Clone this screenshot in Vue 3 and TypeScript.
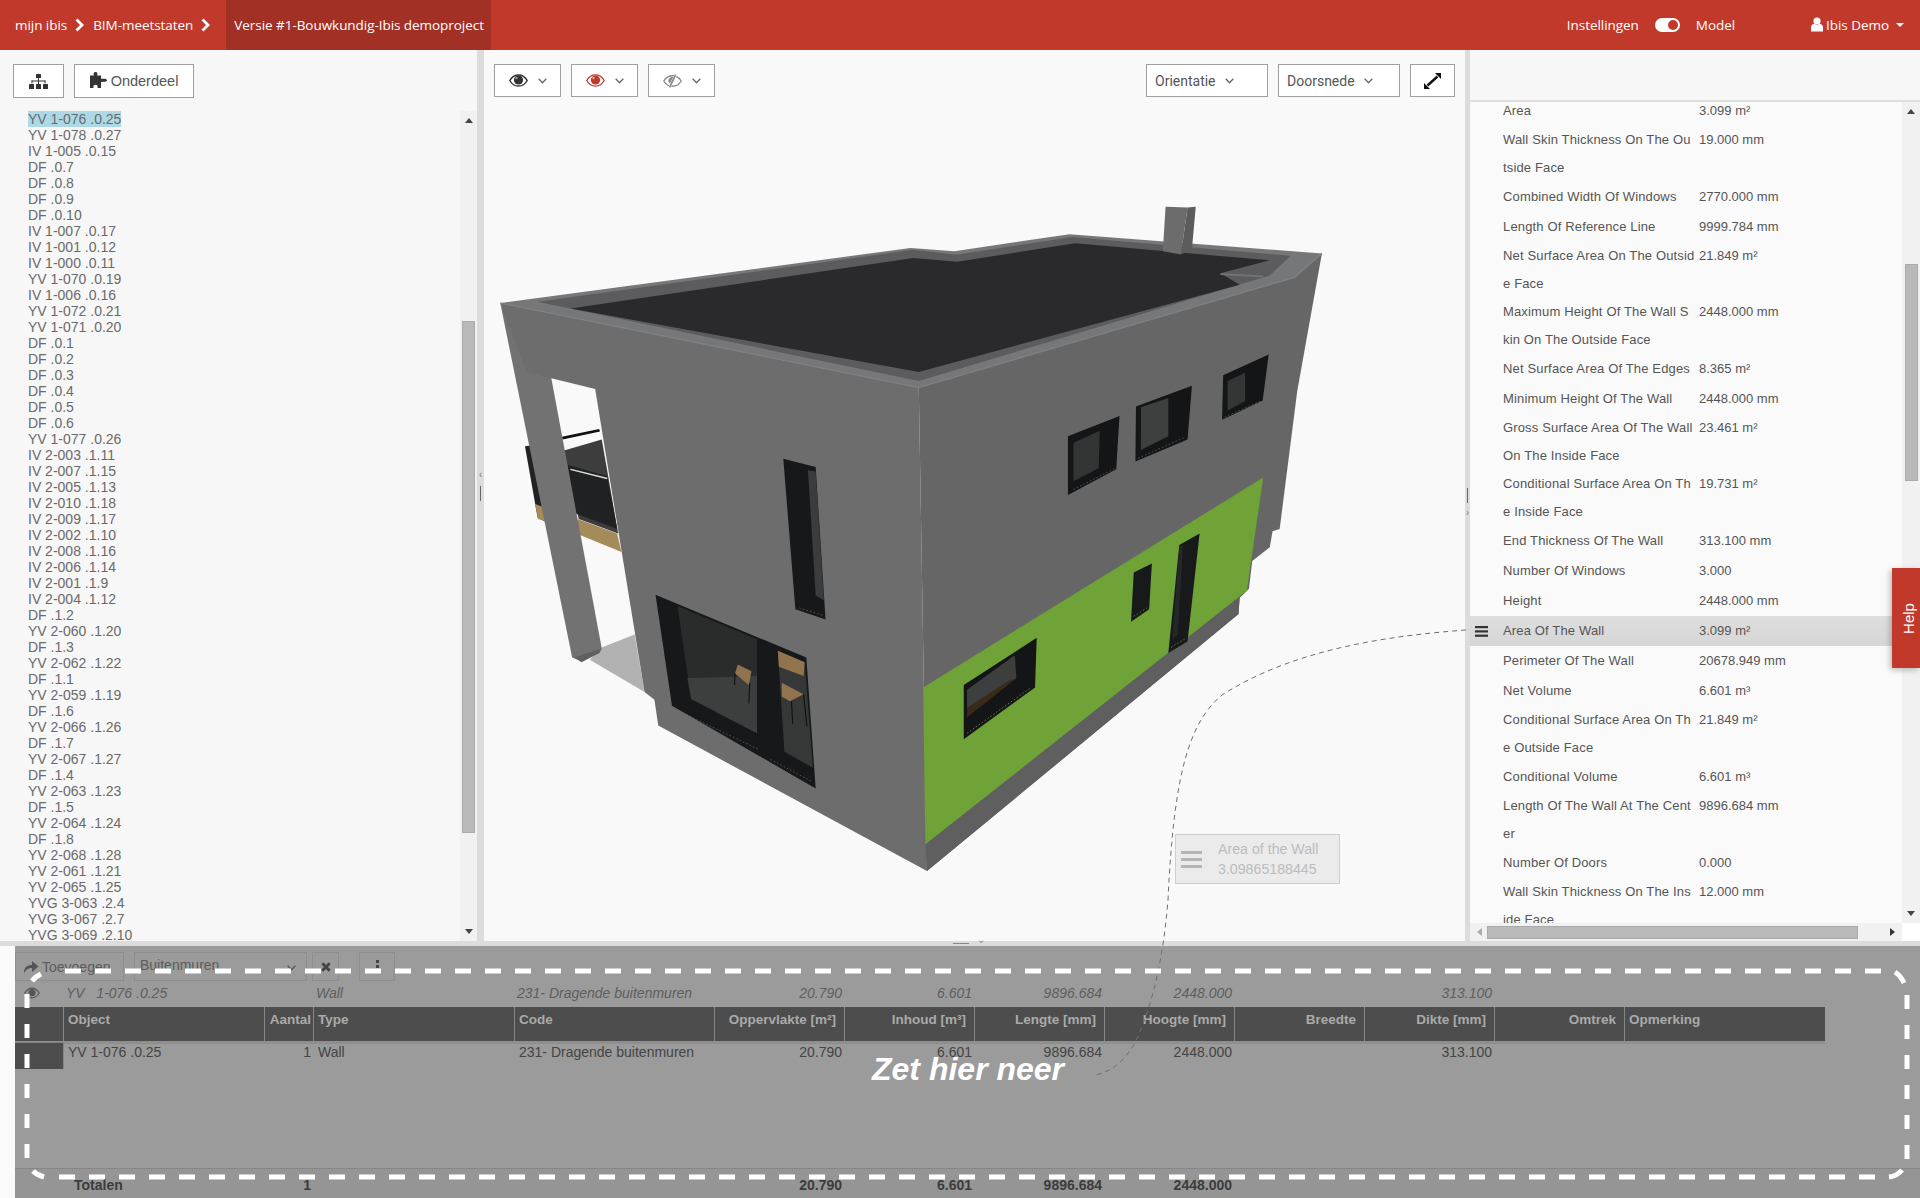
<script setup lang="ts">
const items: string[] = [
  'YV 1-076 .0.25','YV 1-078 .0.27','IV 1-005 .0.15','DF .0.7','DF .0.8','DF .0.9','DF .0.10','IV 1-007 .0.17','IV 1-001 .0.12','IV 1-000 .0.11','YV 1-070 .0.19','IV 1-006 .0.16','YV 1-072 .0.21','YV 1-071 .0.20','DF .0.1','DF .0.2','DF .0.3','DF .0.4','DF .0.5','DF .0.6','YV 1-077 .0.26','IV 2-003 .1.11','IV 2-007 .1.15','IV 2-005 .1.13','IV 2-010 .1.18','IV 2-009 .1.17','IV 2-002 .1.10','IV 2-008 .1.16','IV 2-006 .1.14','IV 2-001 .1.9','IV 2-004 .1.12','DF .1.2','YV 2-060 .1.20','DF .1.3','YV 2-062 .1.22','DF .1.1','YV 2-059 .1.19','DF .1.6','YV 2-066 .1.26','DF .1.7','YV 2-067 .1.27','DF .1.4','YV 2-063 .1.23','DF .1.5','YV 2-064 .1.24','DF .1.8','YV 2-068 .1.28','YV 2-061 .1.21','YV 2-065 .1.25','YVG 3-063 .2.4','YVG 3-067 .2.7','YVG 3-069 .2.10'
]
interface Prop { label: string; value: string; active?: boolean }
const props: Prop[] = [
  { label: 'Area', value: '3.099 m²' },
  { label: 'Wall Skin Thickness On The Ou\ntside Face', value: '19.000 mm' },
  { label: 'Combined Width Of Windows', value: '2770.000 mm' },
  { label: 'Length Of Reference Line', value: '9999.784 mm' },
  { label: 'Net Surface Area On The Outsid\ne Face', value: '21.849 m²' },
  { label: 'Maximum Height Of The Wall S\nkin On The Outside Face', value: '2448.000 mm' },
  { label: 'Net Surface Area Of The Edges', value: '8.365 m²' },
  { label: 'Minimum Height Of The Wall', value: '2448.000 mm' },
  { label: 'Gross Surface Area Of The Wall\nOn The Inside Face', value: '23.461 m²' },
  { label: 'Conditional Surface Area On Th\ne Inside Face', value: '19.731 m²' },
  { label: 'End Thickness Of The Wall', value: '313.100 mm' },
  { label: 'Number Of Windows', value: '3.000' },
  { label: 'Height', value: '2448.000 mm' },
  { label: 'Area Of The Wall', value: '3.099 m²', active: true },
  { label: 'Perimeter Of The Wall', value: '20678.949 mm' },
  { label: 'Net Volume', value: '6.601 m³' },
  { label: 'Conditional Surface Area On Th\ne Outside Face', value: '21.849 m²' },
  { label: 'Conditional Volume', value: '6.601 m³' },
  { label: 'Length Of The Wall At The Cent\ner', value: '9896.684 mm' },
  { label: 'Number Of Doors', value: '0.000' },
  { label: 'Wall Skin Thickness On The Ins\nide Face', value: '12.000 mm' }
]
interface Col { head: string; right: boolean; filter: string; row: string; total: string }
const cols: Col[] = [
  { head: '', right: false, filter: '', row: '', total: '' },
  { head: 'Object', right: false, filter: 'YV\u00a0\u00a0\u00a01-076 .0.25', row: 'YV 1-076 .0.25', total: 'Totalen' },
  { head: 'Aantal', right: true, filter: '', row: '1', total: '1' },
  { head: 'Type', right: false, filter: 'Wall', row: 'Wall', total: '' },
  { head: 'Code', right: false, filter: '231- Dragende buitenmuren', row: '231- Dragende buitenmuren', total: '' },
  { head: 'Oppervlakte [m²]', right: true, filter: '20.790', row: '20.790', total: '20.790' },
  { head: 'Inhoud [m³]', right: true, filter: '6.601', row: '6.601', total: '6.601' },
  { head: 'Lengte [mm]', right: true, filter: '9896.684', row: '9896.684', total: '9896.684' },
  { head: 'Hoogte [mm]', right: true, filter: '2448.000', row: '2448.000', total: '2448.000' },
  { head: 'Breedte', right: true, filter: '', row: '', total: '' },
  { head: 'Dikte [mm]', right: true, filter: '313.100', row: '313.100', total: '' },
  { head: 'Omtrek', right: true, filter: '', row: '', total: '' },
  { head: 'Opmerking', right: false, filter: '', row: '', total: '' }
]
</script>

<template>
  <div class="page">
    <header class="topbar">
      <span class="crumb">mijn ibis</span>
      <svg class="chev" width="9" height="14" viewBox="0 0 9 14"><path d="M1.5 1.5 L7 7 L1.5 12.5" /></svg>
      <span class="crumb">BIM-meetstaten</span>
      <svg class="chev" width="9" height="14" viewBox="0 0 9 14"><path d="M1.5 1.5 L7 7 L1.5 12.5" /></svg>
      <span class="crumb current">Versie #1-Bouwkundig-Ibis demoproject</span>
      <div class="topright">
        <span class="crumb">Instellingen</span>
        <span class="toggle"><i></i></span>
        <span class="crumb model">Model</span>
        <span class="user">
          <svg width="12" height="15" viewBox="0 0 12 15"><circle cx="6" cy="4" r="3.6" fill="#fff" /><path d="M0 14.5 V10.5 C0 8 2 7 3.6 6.8 C5 8 7 8 8.4 6.8 C10 7 12 8 12 10.5 V14.5 Z" fill="#fff" /></svg>
          <span class="crumb">Ibis Demo</span>
          <i class="caret"></i>
        </span>
      </div>
    </header>

    <main class="main">
      <section class="left">
        <div class="lefttools">
          <button class="btn tree">
            <svg width="19" height="15" viewBox="0 0 19 15" fill="#333"><rect x="7" y="0" width="5" height="4" rx=".6"/><rect x="9" y="4" width="1" height="3"/><rect x="2.5" y="6.5" width="14" height="1"/><rect x="2.5" y="6.5" width="1" height="3"/><rect x="15.5" y="6.5" width="1" height="3"/><rect x="9" y="7" width="1" height="3"/><rect x="0" y="10" width="5" height="5" rx=".6"/><rect x="7" y="10" width="5" height="5" rx=".6"/><rect x="14" y="10" width="5" height="5" rx=".6"/></svg>
          </button>
          <button class="btn part">
            <svg width="17" height="16" viewBox="0 0 17 16" fill="#333"><path d="M0 3.5 H4 C3 2 3.5 0 5.5 0 C7.5 0 8 2 7 3.5 H11 V7 C12 6.3 12.6 6.8 14 6.8 C16 6.8 17 7.5 17 8.3 C17 9.2 16 9.8 14 9.8 C12.6 9.8 12 10.3 11 9.7 V16 H7.5 C8 14.5 7.5 12.8 5.5 12.8 C3.5 12.8 3 14.5 3.5 16 H0 Z"/></svg>
            <span>Onderdeel</span>
          </button>
        </div>
        <div class="listwrap">
          <ul class="list">
            <li v-for="(it, i) in items" :key="i"><span :class="{ sel: i === 0 }">{{ it }}</span></li>
          </ul>
          <div class="vscroll lefts">
            <i class="up"></i>
            <i class="thumb"></i>
            <i class="down"></i>
          </div>
        </div>
      </section>

      <div class="vsplit">
        <i class="grip g1">‹</i>
        <i class="bar"></i>
      </div>

      <section class="viewer">
        <div class="viewtools">
          <button class="btn vbtn">
            <svg class="eye" width="19" height="13" viewBox="0 0 19 13"><path d="M.8 6.5 C3 2.6 6 .9 9.5 .9 C13 .9 16 2.6 18.2 6.5 C16 10.4 13 12.1 9.5 12.1 C6 12.1 3 10.4 .8 6.5 Z" fill="none" stroke="#333" stroke-width="1.5"/><circle cx="9.5" cy="6" r="4.6" fill="#333"/><circle cx="7.5" cy="4" r="1.2" fill="#999"/></svg>
            <svg class="vee" width="9" height="6" viewBox="0 0 9 6"><path d="M.7.7 L4.5 4.7 L8.3.7" /></svg>
          </button>
          <button class="btn vbtn">
            <svg class="eye" width="19" height="13" viewBox="0 0 19 13"><path d="M.8 6.5 C3 2.6 6 .9 9.5 .9 C13 .9 16 2.6 18.2 6.5 C16 10.4 13 12.1 9.5 12.1 C6 12.1 3 10.4 .8 6.5 Z" fill="none" stroke="#c0392b" stroke-width="1.3"/><circle cx="9.5" cy="6" r="4.6" fill="#c0392b"/><circle cx="7.5" cy="4" r="1.2" fill="#e6a69e"/></svg>
            <svg class="vee" width="9" height="6" viewBox="0 0 9 6"><path d="M.7.7 L4.5 4.7 L8.3.7" /></svg>
          </button>
          <button class="btn vbtn">
            <svg class="eye" width="19" height="14" viewBox="0 0 19 14"><path d="M.8 7 C3 3.4 6 1.8 9.5 1.8 C13 1.8 16 3.4 18.2 7 C16 10.6 13 12.2 9.5 12.2 C6 12.2 3 10.6 .8 7 Z" fill="none" stroke="#8c8c8c" stroke-width="1.4"/><path d="M9.5 3 C7 3 5 5 5.4 7.5 L7.6 10 L11 3.2 Z" fill="#8c8c8c"/><path d="M13 .4 L6.4 13.6" stroke="#fff" stroke-width="2.6"/><path d="M12.6 .6 L6.6 13.4" stroke="#8c8c8c" stroke-width="1.8"/></svg>
            <svg class="vee" width="9" height="6" viewBox="0 0 9 6"><path d="M.7.7 L4.5 4.7 L8.3.7" /></svg>
          </button>
          <span class="spacer"></span>
          <button class="btn drop o">
            <span>Orientatie</span>
            <svg class="vee" width="9" height="6" viewBox="0 0 9 6"><path d="M.7.7 L4.5 4.7 L8.3.7" /></svg>
          </button>
          <button class="btn drop d">
            <span>Doorsnede</span>
            <svg class="vee" width="9" height="6" viewBox="0 0 9 6"><path d="M.7.7 L4.5 4.7 L8.3.7" /></svg>
          </button>
          <button class="btn full">
            <svg width="17" height="16" viewBox="0 0 17 16" fill="#111"><polygon points="11,0 17,0 17,6" /><polygon points="0,10 0,16 6,16" /><path d="M3.5 12.5 L13.5 3.5" stroke="#111" stroke-width="2.4" fill="none" /></svg>
          </button>
        </div>

        <svg class="model3d" width="860" height="720" viewBox="0 0 1568 1568" preserveAspectRatio="none">
          <!-- balcony behind the column -->
          <polygon points="82,580 92,578 120,745 105,735" fill="#222" />
          <polygon points="100,705 120,715 125,745 106,738" fill="#a58a5a" />
          <polygon points="150,590 222,565 252,770 180,738" fill="#3d3d3e" />
          <polygon points="160,620 232,645 250,760 172,725" fill="#202122" />
          <polygon points="178,738 250,770 258,810 180,772" fill="#a58a5a" />
          <path d="M150 562 L218 545" stroke="#111" stroke-width="6" />
          <path d="M165 630 L232 650" stroke="#ddd" stroke-width="3" />
          <!-- floor -->
          <polygon points="222,1018 282,990 300,1115 200,1045" fill="#b2b2b2" />
          <!-- column -->
          <polygon points="37,268 130,432 222,1020 185,1048 168,1040" fill="#727273" />
          <polygon points="172,1040 222,1020 218,1030 185,1050" fill="#606061" />
          <!-- left wall -->
          <polygon points="37,268 800,452 815,1505 325,1188 318,1132 300,1115 210,455 130,432 85,418" fill="#6d6d6e" />
          <!-- right wall -->
          <polygon points="800,452 1485,212 1535,160 1490,460 1458,760 1445,765 1440,800 1408,830 1402,890 1385,910 1383,945 815,1505" fill="#666667" />
          <!-- green wall -->
          <polygon points="808,1105 1428,648 1398,895 812,1447" fill="#6fa237" />
          <!-- plinth -->
          <polygon points="812,1447 1398,895 1385,910 1383,945 815,1505" fill="#5f5f60" />
          <!-- roof -->
          <polygon points="37,268 785,148 865,155 1075,118 1535,160 1485,212 800,452" fill="#767779" />
          <polygon points="105,265 790,152 868,163 1080,124 1478,165 1440,208 800,438" fill="#5c5c5e" />
          <polygon points="165,280 790,170 870,178 1085,138 1440,175 1350,203 1385,228 800,418" fill="#2a2a2c" />
          <path d="M1350 205 L1428 210" stroke="#747577" stroke-width="4" />
          <path d="M37 268 L800 452 L1485 212 L1535 160" fill="none" stroke="#7e7f81" stroke-width="3" />
          <!-- chimney -->
          <polygon points="1250,58 1290,60 1278,162 1245,155" fill="#6c6c6d" />
          <polygon points="1290,60 1305,58 1298,150 1278,162" fill="#5c5c5d" />
          <!-- upper windows -->
          <polygon points="1072,558 1166,514 1160,630 1072,686" fill="#141516" />
          <polygon points="1082,572 1130,546 1128,628 1082,656" fill="#323534" />
          <polygon points="1196,493 1298,448 1290,565 1195,613" fill="#141516" />
          <polygon points="1205,495 1255,475 1255,558 1205,588" fill="#3e4040" />
          <polygon points="1355,425 1438,380 1427,480 1353,522" fill="#141516" />
          <polygon points="1363,438 1395,420 1395,482 1363,502" fill="#333635" />
          <path d="M1082 674 L1158 628 M1200 606 L1286 560 M1358 516 L1422 482" stroke="#666" stroke-width="1.5" stroke-dasharray="3 4" />
          <!-- narrow window -->
          <polygon points="553,607 612,625 630,957 575,935" fill="#171819" />
          <polygon points="598,632 612,635 627,915 612,905" fill="#3a3c3d" />
          <path d="M582 932 L626 948" stroke="#666" stroke-width="1.5" stroke-dasharray="3 4" />
          <!-- large left window -->
          <polygon points="320,903 595,1040 612,1325 350,1145" fill="#171819" />
          <polygon points="360,928 505,1000 505,1205 385,1130" fill="#2a2c2b" />
          <polygon points="378,1085 505,1080 505,1205 385,1130" fill="#3d3e3e" />
          <polygon points="543,1025 592,1050 607,1280 555,1245" fill="#363737" />
          <polygon points="543,1025 592,1050 590,1080 545,1060" fill="#8f744e" />
          <polygon points="470,1055 495,1070 490,1100 465,1075" fill="#8f744e" />
          <polygon points="550,1095 590,1120 565,1135 550,1125" fill="#8f744e" />
          <path d="M465 1075 L464 1100 M492 1095 L490 1140 M568 1135 L570 1185 M590 1120 L596 1190" stroke="#111" stroke-width="2" fill="none" />
          <path d="M352 1150 L508 1240 M530 1262 L605 1310" stroke="#666" stroke-width="1.5" stroke-dasharray="3 4" />
          <!-- lower right windows -->
          <polygon points="882,1100 1015,997 1012,1105 882,1218" fill="#141516" />
          <polygon points="888,1110 975,1035 978,1085 888,1150" fill="#3d3e3e" />
          <polygon points="888,1150 965,1090 978,1085 888,1170" fill="#3a2a1a" />
          <path d="M888 1205 L1005 1105" stroke="#8f9360" stroke-width="1.5" stroke-dasharray="3 4" />
          <polygon points="1192,855 1225,835 1220,935 1187,962" fill="#18191a" />
          <path d="M1192 950 L1216 932" stroke="#8f9360" stroke-width="1.5" stroke-dasharray="3 4" />
          <polygon points="1275,795 1312,770 1290,1005 1255,1030" fill="#18191a" />
          <polygon points="1262,1000 1275,800 1282,795 1272,990" fill="#262828" />
          <path d="M1260 1018 L1287 998" stroke="#8f9360" stroke-width="1.5" stroke-dasharray="3 4" />
        </svg>

        <div class="tip">
          <span class="tipicon"><i></i><i></i><i></i></span>
          <div class="tiptext">
            <div>Area of the Wall</div>
            <div>3.09865188445</div>
          </div>
        </div>
      </section>

      <div class="vsplit thin">
        <i class="bar rb"></i>
        <i class="grip g2">›</i>
      </div>

      <section class="right">
        <div class="righttop"></div>
        <div class="rightbody">
          <div class="rightcol">
            <div class="rows">
              <div v-for="(p, i) in props" :key="i" class="prow" :class="{ active: p.active, multi: p.label.includes('\n') }">
                <span class="slot">
                  <svg v-if="p.active" width="13" height="11" viewBox="0 0 13 11" fill="#333"><rect y="0" width="13" height="2.2"/><rect y="4.3" width="13" height="2.2"/><rect y="8.6" width="13" height="2.2"/></svg>
                </span>
                <span class="plabel">{{ p.label }}</span>
                <span class="pvalue">{{ p.value }}</span>
              </div>
            </div>
            <div class="hscroll">
              <i class="hleft"></i>
              <i class="hthumb"></i>
              <i class="hright"></i>
            </div>
          </div>
          <div class="rightbar">
            <div class="vscroll rights">
              <i class="up"></i>
              <i class="thumb"></i>
              <i class="down"></i>
            </div>
            <i class="corner"></i>
          </div>
        </div>
      </section>
    </main>

    <div class="hsplit"><i class="dash"></i><i class="vmark">⌄</i></div>

    <section class="bottom">
      <div class="panel">
        <div class="ptools">
          <button class="pbtn add">
            <svg width="16" height="14" viewBox="0 0 16 14" fill="#555"><path d="M1 13.5 C.4 7 5 5 9 5 V1 L15.5 6.5 L9 12 V8 C5.5 8 2.5 9.5 1 13.5 Z"/></svg>
            <span>Toevoegen</span>
          </button>
          <div class="pbtn select">
            <span>Buitenmuren</span>
            <svg class="vee dark" width="9" height="6" viewBox="0 0 9 6"><path d="M.7.7 L4.5 4.7 L8.3.7" /></svg>
          </div>
          <button class="pbtn close">
            <svg width="10" height="10" viewBox="0 0 10 10"><path d="M1.3 1.3 L8.7 8.7 M8.7 1.3 L1.3 8.7" stroke="#444" stroke-width="2.8" fill="none"/></svg>
          </button>
          <button class="pbtn dots"><i></i><i></i><i></i></button>
        </div>

        <div class="grid filter">
          <div v-for="(c, i) in cols" :key="i" class="cell" :class="{ r: c.right }">
            <svg v-if="i === 0" class="feye" width="16" height="12" viewBox="0 0 16 12"><path d="M.8 6 C3 2.6 5 1.2 8 1.2 C11 1.2 13 2.6 15.2 6 C13 9.4 11 10.8 8 10.8 C5 10.8 3 9.4 .8 6 Z" fill="none" stroke="#555" stroke-width="1.2"/><circle cx="8" cy="5.6" r="3.6" fill="#555"/></svg>
            {{ c.filter }}
          </div>
        </div>
        <div class="grid head">
          <div v-for="(c, i) in cols" :key="i" class="hcell" :class="{ r: c.right }">{{ c.head }}</div>
        </div>
        <div class="grid data">
          <div v-for="(c, i) in cols" :key="i" class="cell" :class="{ r: c.right, stub: i === 0 }">{{ c.row }}</div>
        </div>
        <div class="fill"></div>
        <div class="grid totals">
          <div v-for="(c, i) in cols" :key="i" class="cell" :class="{ r: c.right, tname: i === 1 }">{{ c.total }}</div>
        </div>
      </div>
    </section>

    <!-- connector from the selected property to the drop zone -->
    <svg class="connector" width="1920" height="1198" viewBox="0 0 1920 1198">
      <path d="M1466 630 C1385 636 1292 650 1222 695 C1190 722 1174 770 1168 900 C1164 950 1155 1000 1135 1043 C1125 1060 1112 1072 1095 1075" fill="none" stroke="#6f6f6f" stroke-width="1" stroke-dasharray="5 4" />
    </svg>

    <!-- drop zone outline -->
    <svg class="dropzone" width="1920" height="1198" viewBox="0 0 1920 1198">
      <g fill="none" stroke="#fff" stroke-width="5">
        <path d="M65 971 H1881" stroke-dasharray="16 14" />
        <path d="M59 1177 H1875" stroke-dasharray="16 14" />
        <path d="M27 994 V1160" stroke-dasharray="14 16" />
        <path d="M1907 995 V1160" stroke-dasharray="14 16" />
        <path d="M32 981 Q35 977 41 974" />
        <path d="M1895 972 Q1901 976 1904 983" />
        <path d="M33 1171 Q37 1175 44 1177" />
        <path d="M1889 1177 Q1897 1176 1902 1170" />
      </g>
    </svg>
    <div class="droptext">Zet hier neer</div>

    <div class="help"><span>Help</span></div>
  </div>
</template>

<style>
html, body { margin: 0; padding: 0; background: #fff; }
</style>

<style scoped>
.page { position: relative; width: 1920px; height: 1198px; overflow: hidden; display: flex; flex-direction: column; font-family: Roboto, "Liberation Sans", sans-serif; font-size: 14px; color: #555; background: #fafafa; }
button { font: inherit; color: inherit; padding: 0; margin: 0; }
i { font-style: normal; display: block; }

.topbar { height: 50px; flex: none; background: #c0392b; display: flex; align-items: center; padding: 0 0 1px 15px; color: #fff; box-sizing: border-box; }
.crumb { font-family: "Open Sans", sans-serif; font-size: 13.5px; color: #fff; letter-spacing: -.05px; }
.chev { margin: 0 9px 0 8px; }
.chev path { fill: none; stroke: #fff; stroke-width: 2.8; }
.current { height: 50px; line-height: 50px; margin-bottom: -1px; background: #a33024; margin-left: 7px; width: 265px; box-sizing: border-box; padding-left: 8px; white-space: nowrap; }
.topright { margin-left: auto; display: flex; align-items: center; padding-right: 16px; }
.toggle { width: 25px; height: 14px; border-radius: 7px; background: #fff; margin: 0 16px; display: block; position: relative; }
.toggle i { position: absolute; right: 2px; top: 2px; width: 10px; height: 10px; border-radius: 50%; background: #c0392b; }
.model { margin-right: 76px; }
.user { display: flex; align-items: center; gap: 3px; }
.caret { width: 0; height: 0; border-left: 4px solid transparent; border-right: 4px solid transparent; border-top: 4px solid #fff; margin-left: 4px; }

.main { height: 891px; flex: none; display: flex; }
.left { width: 477px; flex: none; background: #f7f7f7; display: flex; flex-direction: column; }
.lefttools { height: 61px; flex: none; display: flex; gap: 10px; padding: 14px 0 0 13px; box-sizing: border-box; }
.btn { border: 1.5px solid #a0a0a0; background: #fff; box-sizing: border-box; display: flex; align-items: center; justify-content: center; height: 34px; cursor: default; }
.tree { width: 51px; }
.part { width: 120px; gap: 4px; font-family: "Liberation Sans", sans-serif; font-size: 14.5px; color: #555; }
.part svg { margin-top: -2px; }
.listwrap { flex: 1; min-height: 0; display: flex; }
.list { flex: 1; list-style: none; margin: 0; padding: 0 0 0 28px; overflow: hidden; }
.list li { height: 16px; line-height: 16px; font-family: "Liberation Sans", sans-serif; font-size: 14px; color: #6a6a6a; white-space: nowrap; }
.sel { background: #add8e6; display: inline-block; }

.vscroll { width: 17px; flex: none; background: #f1f1f1; position: relative; box-sizing: border-box; display: flex; flex-direction: column; align-items: center; }
.up { width: 0; height: 0; border-left: 4px solid transparent; border-right: 4px solid transparent; border-bottom: 5px solid #444; }
.down { width: 0; height: 0; border-left: 4px solid transparent; border-right: 4px solid transparent; border-top: 5px solid #444; margin-top: auto; }
.thumb { width: 13px; background: #b9b9b9; border: 1px solid #aaa; box-sizing: border-box; }
.lefts .up { margin-top: 7px; }
.lefts .thumb { margin-top: 198px; height: 512px; }
.lefts .down { margin-bottom: 7px; }

.vsplit { width: 7px; flex: none; background: #dcdcdc; display: flex; flex-direction: column; align-items: center; position: relative; }
.vsplit.thin { width: 5px; }
.grip { font-size: 10px; line-height: 10px; color: #777; }
.g1 { margin-top: 420px; }
.bar { width: 1px; height: 15px; background: #666; }
.g1 + .bar { margin-top: 6px; }
.rb { margin-top: 438px; }
.g2 { margin-top: 5px; }

.viewer { width: 981px; flex: none; background: #f9f9f9; position: relative; }
.viewtools { display: flex; padding: 14px 10px 0 10px; gap: 10px; height: 47px; box-sizing: border-box; }
.vbtn { width: 67px; height: 33px; gap: 10px; }
.vee { fill: none; }
.vee path { fill: none; stroke: #666; stroke-width: 1.3; }
.spacer { flex: 1; }
.drop { height: 33px; justify-content: flex-start; padding-left: 8px; gap: 9px; font-size: 14px; color: #555; }
.o { width: 122px; }
.d { width: 122px; }
.full { width: 45px; height: 33px; }
.model3d { position: absolute; left: -4px; top: 130px; }
.tip { position: absolute; left: 691px; top: 784px; width: 165px; height: 50px; box-sizing: border-box; background: #ebebeb; border: 1px solid #cfcfcf; display: flex; align-items: center; }
.tipicon { width: 21px; margin-left: 5px; display: flex; flex-direction: column; gap: 4px; }
.tipicon i { height: 3px; background: #b5b5b5; }
.tiptext { margin-left: 16px; font-family: "Liberation Sans", sans-serif; font-size: 14.2px; line-height: 20.5px; color: #bcbcbc; white-space: nowrap; }

.right { flex: 1; min-width: 0; display: flex; flex-direction: column; background: #fafafa; }
.righttop { height: 52px; flex: none; background: #f7f7f7; border-bottom: 2px solid #dedede; box-sizing: border-box; }
.rightbody { flex: 1; min-height: 0; display: flex; }
.rightcol { flex: 1; min-width: 0; display: flex; flex-direction: column; }
.rows { flex: 1; min-height: 0; overflow: hidden; }
.prow { display: flex; align-items: center; min-height: 30px; font-family: "Liberation Sans", sans-serif; font-size: 13px; color: #555; line-height: 28px; white-space: pre-line; }
.prow:first-child { margin-top: -6px; }
.prow.active { background: linear-gradient(#dedede, #d6d6d6); }
.slot { width: 33px; flex: none; padding-left: 5px; box-sizing: border-box; display: flex; align-items: center; }
.plabel { width: 196px; flex: none; letter-spacing: .15px; }
.pvalue { flex: none; }
.multi .pvalue { align-self: flex-start; }
.hscroll { height: 18px; flex: none; background: #f1f1f1; display: flex; align-items: center; position: relative; }
.hleft { width: 0; height: 0; border-top: 4px solid transparent; border-bottom: 4px solid transparent; border-right: 5px solid #aaa; margin-left: 7px; }
.hthumb { width: 371px; height: 13px; background: #b9b9b9; border: 1px solid #aaa; box-sizing: border-box; margin-left: 5px; }
.hright { width: 0; height: 0; border-top: 4px solid transparent; border-bottom: 4px solid transparent; border-left: 5px solid #333; margin-left: 32px; }
.rightbar { width: 18px; flex: none; display: flex; flex-direction: column; }
.rights { flex: 1; width: 18px; }
.rights .up { margin-top: 7px; }
.rights .thumb { margin-top: 150px; height: 217px; width: 13px; }
.rights .down { margin-bottom: 7px; }
.corner { height: 18px; flex: none; background: #fff; }

.hsplit { height: 5px; flex: none; background: #dcdcdc; position: relative; }
.dash { position: absolute; left: 953px; top: 2px; width: 16px; height: 1px; background: #888; }
.vmark { position: absolute; left: 977px; top: -6px; font-size: 10px; line-height: 10px; color: #888; }

.bottom { flex: 1; min-height: 0; padding-left: 15px; background: #fafafa; display: flex; }
.panel { flex: 1; background: #9b9b9b; display: flex; flex-direction: column; min-width: 0; color: #444; font-family: "Liberation Sans", sans-serif; }
.ptools { height: 35px; flex: none; display: flex; padding-top: 6px; box-sizing: border-box; }
.pbtn { height: 29px; border: 1px solid #8e8e8e; background: #9b9b9b; box-sizing: border-box; display: flex; align-items: center; color: #5c5c5c; font-size: 14px; font-family: "Liberation Sans", sans-serif; }
.add { width: 109px; padding-left: 7px; gap: 3px; }
.select { width: 173px; margin-left: 10px; padding: 0 5px; justify-content: space-between; }
.select span { margin-top: -3px; }
.vee.dark { margin: 3px 5px 0 0; }
.vee.dark path { stroke: #555; }
.close { width: 27px; margin-left: 5px; justify-content: center; }
.dots { width: 36px; margin-left: 20px; flex-direction: column; justify-content: center; gap: 2px; }
.dots i { width: 3px; height: 3px; background: #444; }

.grid { display: grid; grid-template-columns: 49px 201px 49px 201px 200px repeat(7, 130px) 200px; width: 1810px; flex: none; }
.cell { font-size: 14px; padding: 0 3px 0 4px; white-space: nowrap; overflow: visible; }
.cell.r { text-align: right; }
.filter { height: 26px; line-height: 24px; font-style: italic; color: #5e5e5e; }
.filter .cell { padding-left: 2px; }
.feye { display: block; margin: 6px 0 0 7px; }
.head { height: 34px; background: #4d4d4d; box-shadow: 0 3px 0 #8f8f8f; }
.hcell { font-size: 13.5px; font-weight: 700; color: #aaa; padding: 4px 8px 0 4px; line-height: 17px; border-right: 1px solid #868686; box-sizing: border-box; white-space: nowrap; }
.hcell.r { text-align: right; }
.hcell:nth-child(3) { padding: 4px 2px 0 2px; }
.hcell:last-child { border-right: none; }
.data { height: 27px; line-height: 20px; padding-top: 1px; color: #444; box-sizing: content-box; }
.data .stub { background: #4d4d4d; border-top: 1px solid #868686; border-right: 1px solid #868686; box-sizing: border-box; height: 27px; }
.fill { flex: 1; }
.totals { width: auto; height: 29px; line-height: 32px; border-top: 1px solid #868686; background: #959595; font-weight: 700; color: #3c3c3c; }
.tname { padding-left: 10px; }

.connector, .dropzone { position: absolute; left: 0; top: 0; pointer-events: none; }
.droptext { position: absolute; left: 872px; top: 1050px; font-family: "Liberation Sans", sans-serif; font-weight: 700; font-style: italic; font-size: 32px; line-height: 38px; color: #fff; white-space: nowrap; }
.help { position: absolute; right: 0; top: 568px; width: 28px; height: 100px; background: #c0392b; box-shadow: -2px 2px 6px rgba(0,0,0,.25); display: flex; align-items: center; justify-content: flex-end; }
.help span { display: block; transform: rotate(-90deg); font-family: "Liberation Sans", sans-serif; font-size: 15px; color: #fff; width: 34px; text-align: center; margin-right: -5px; }
</style>
